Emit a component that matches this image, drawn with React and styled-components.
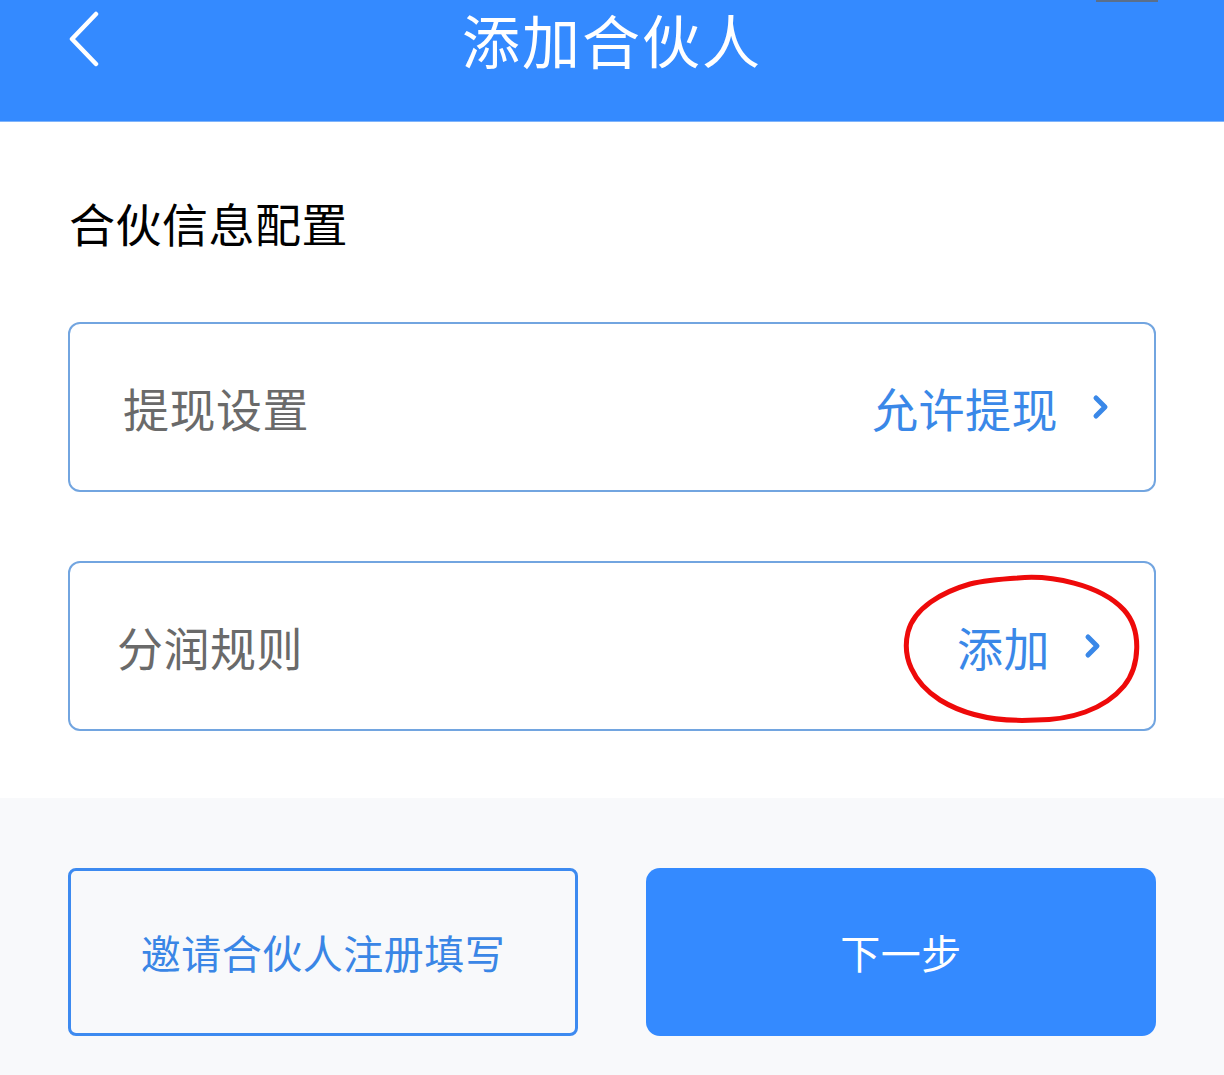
import React from "react";
import styled, { createGlobalStyle } from "styled-components";

const Global = createGlobalStyle`
  html, body { margin: 0; padding: 0; background: #f8f9fb; }
  body { font-family: "Noto Sans CJK SC", "Noto Sans", sans-serif; }
  * { box-sizing: border-box; }
`;

const Page = styled.div`
  width: 1224px;
  height: 1075px;
  display: flex;
  flex-direction: column;
  background: #f8f9fb;
  overflow: hidden;
`;

const Header = styled.header`
  position: relative;
  height: 122px;
  flex: none;
  background: #348aff;
  display: grid;
  grid-template-columns: 140px 1fr 140px;
  align-items: start;
  padding-top: 4px;
  border-bottom: 1px solid #7fb4fb;
`;

const BackButton = styled.button`
  border: 0;
  background: none;
  padding: 0 0 0 66px;
  height: 70px;
  display: flex;
  align-items: center;
  cursor: pointer;
`;

const Title = styled.h1`
  margin: 0;
  text-align: center;
  color: #ffffff;
  font-size: 58px;
  line-height: 70px;
  font-weight: 400;
  letter-spacing: 2px;
`;

const StatusNub = styled.div`
  position: absolute;
  top: 0;
  left: 1096px;
  width: 62px;
  height: 2px;
  background: #5b6f8a;
`;

const Content = styled.main`
  background: #ffffff;
  padding: 77px 68px 67px;
  display: flex;
  flex-direction: column;
`;

const SectionTitle = styled.h2`
  margin: 0 0 77px 1px;
  font-size: 46px;
  line-height: 46px;
  font-weight: 400;
  color: #000000;
  letter-spacing: 0.5px;
`;

const Cards = styled.div`
  display: flex;
  flex-direction: column;
  gap: 69px;
`;

const Card = styled.div`
  position: relative;
  height: 170px;
  border: 2px solid #72a5e0;
  border-radius: 12px;
  display: flex;
  align-items: center;
  justify-content: space-between;
  padding: 0 ${(p) => p.$right}px 0 ${(p) => p.$left}px;
`;

const Label = styled.span`
  font-size: 46px;
  line-height: 46px;
  color: #6a6a6a;
  letter-spacing: 0.5px;
`;

const Value = styled.span`
  display: flex;
  align-items: center;
  gap: 34px;
  font-size: 46px;
  line-height: 46px;
  color: #3a88e8;
  letter-spacing: 0.5px;
`;

const Mark = styled.svg`
  position: absolute;
  left: 830px;
  top: 11px;
  pointer-events: none;
`;

const Footer = styled.footer`
  flex: 1;
  background: #f8f9fb;
  padding: 70px 68px 0;
  display: grid;
  grid-template-columns: 510px 510px;
  column-gap: 68px;
  align-items: start;
`;

const Button = styled.button`
  height: 168px;
  border-radius: ${(p) => (p.$primary ? "14px" : "8px")};
  border: ${(p) => (p.$primary ? "0" : "3px solid #3d8af0")};
  background: ${(p) => (p.$primary ? "#348aff" : "#f8f9fb")};
  color: ${(p) => (p.$primary ? "#ffffff" : "#3a86e6")};
  font-family: "Noto Sans CJK SC", "Noto Sans", sans-serif;
  font-size: 40px;
  line-height: 40px;
  font-weight: 400;
  letter-spacing: 0.5px;
  cursor: pointer;
  padding: 0;
`;

const Chevron = ({ color = "#3a88e8" }) => (
  <svg width="18" height="28" viewBox="0 0 18 28">
    <polyline
      points="4,5 13,14 4,23"
      fill="none"
      stroke={color}
      strokeWidth="5"
      strokeLinecap="round"
      strokeLinejoin="round"
    />
  </svg>
);

export default function App() {
  return (
    <>
      <Global />
      <Page>
        <Header>
          <StatusNub />
          <BackButton aria-label="back">
            <svg width="36" height="56" viewBox="0 0 36 56">
              <polyline
                points="30,3 6,28 30,53"
                fill="none"
                stroke="#ffffff"
                strokeWidth="4.5"
                strokeLinecap="round"
                strokeLinejoin="round"
              />
            </svg>
          </BackButton>
          <Title>添加合伙人</Title>
          <div />
        </Header>
        <Content>
          <SectionTitle>合伙信息配置</SectionTitle>
          <Cards>
            <Card $left={53} $right={44}>
              <Label>提现设置</Label>
              <Value>
                允许提现
                <Chevron />
              </Value>
            </Card>
            <Card $left={47} $right={52}>
              <Label>分润规则</Label>
              <Value>
                添加
                <Chevron />
              </Value>
              <Mark width="242" height="152" viewBox="0 0 242 152">
                <path
                  d="M118,4 C150,1 200,10 224,36 C242,56 240,92 224,112 C204,136 170,146 136,146 C100,148 66,142 40,126 C12,108 2,82 8,58 C14,34 42,18 70,10 C86,6 102,5 118,4 Z"
                  fill="none"
                  stroke="#ee0a0a"
                  strokeWidth="5"
                  strokeLinejoin="round"
                />
              </Mark>
            </Card>
          </Cards>
        </Content>
        <Footer>
          <Button>邀请合伙人注册填写</Button>
          <Button $primary>下一步</Button>
        </Footer>
      </Page>
    </>
  );
}
